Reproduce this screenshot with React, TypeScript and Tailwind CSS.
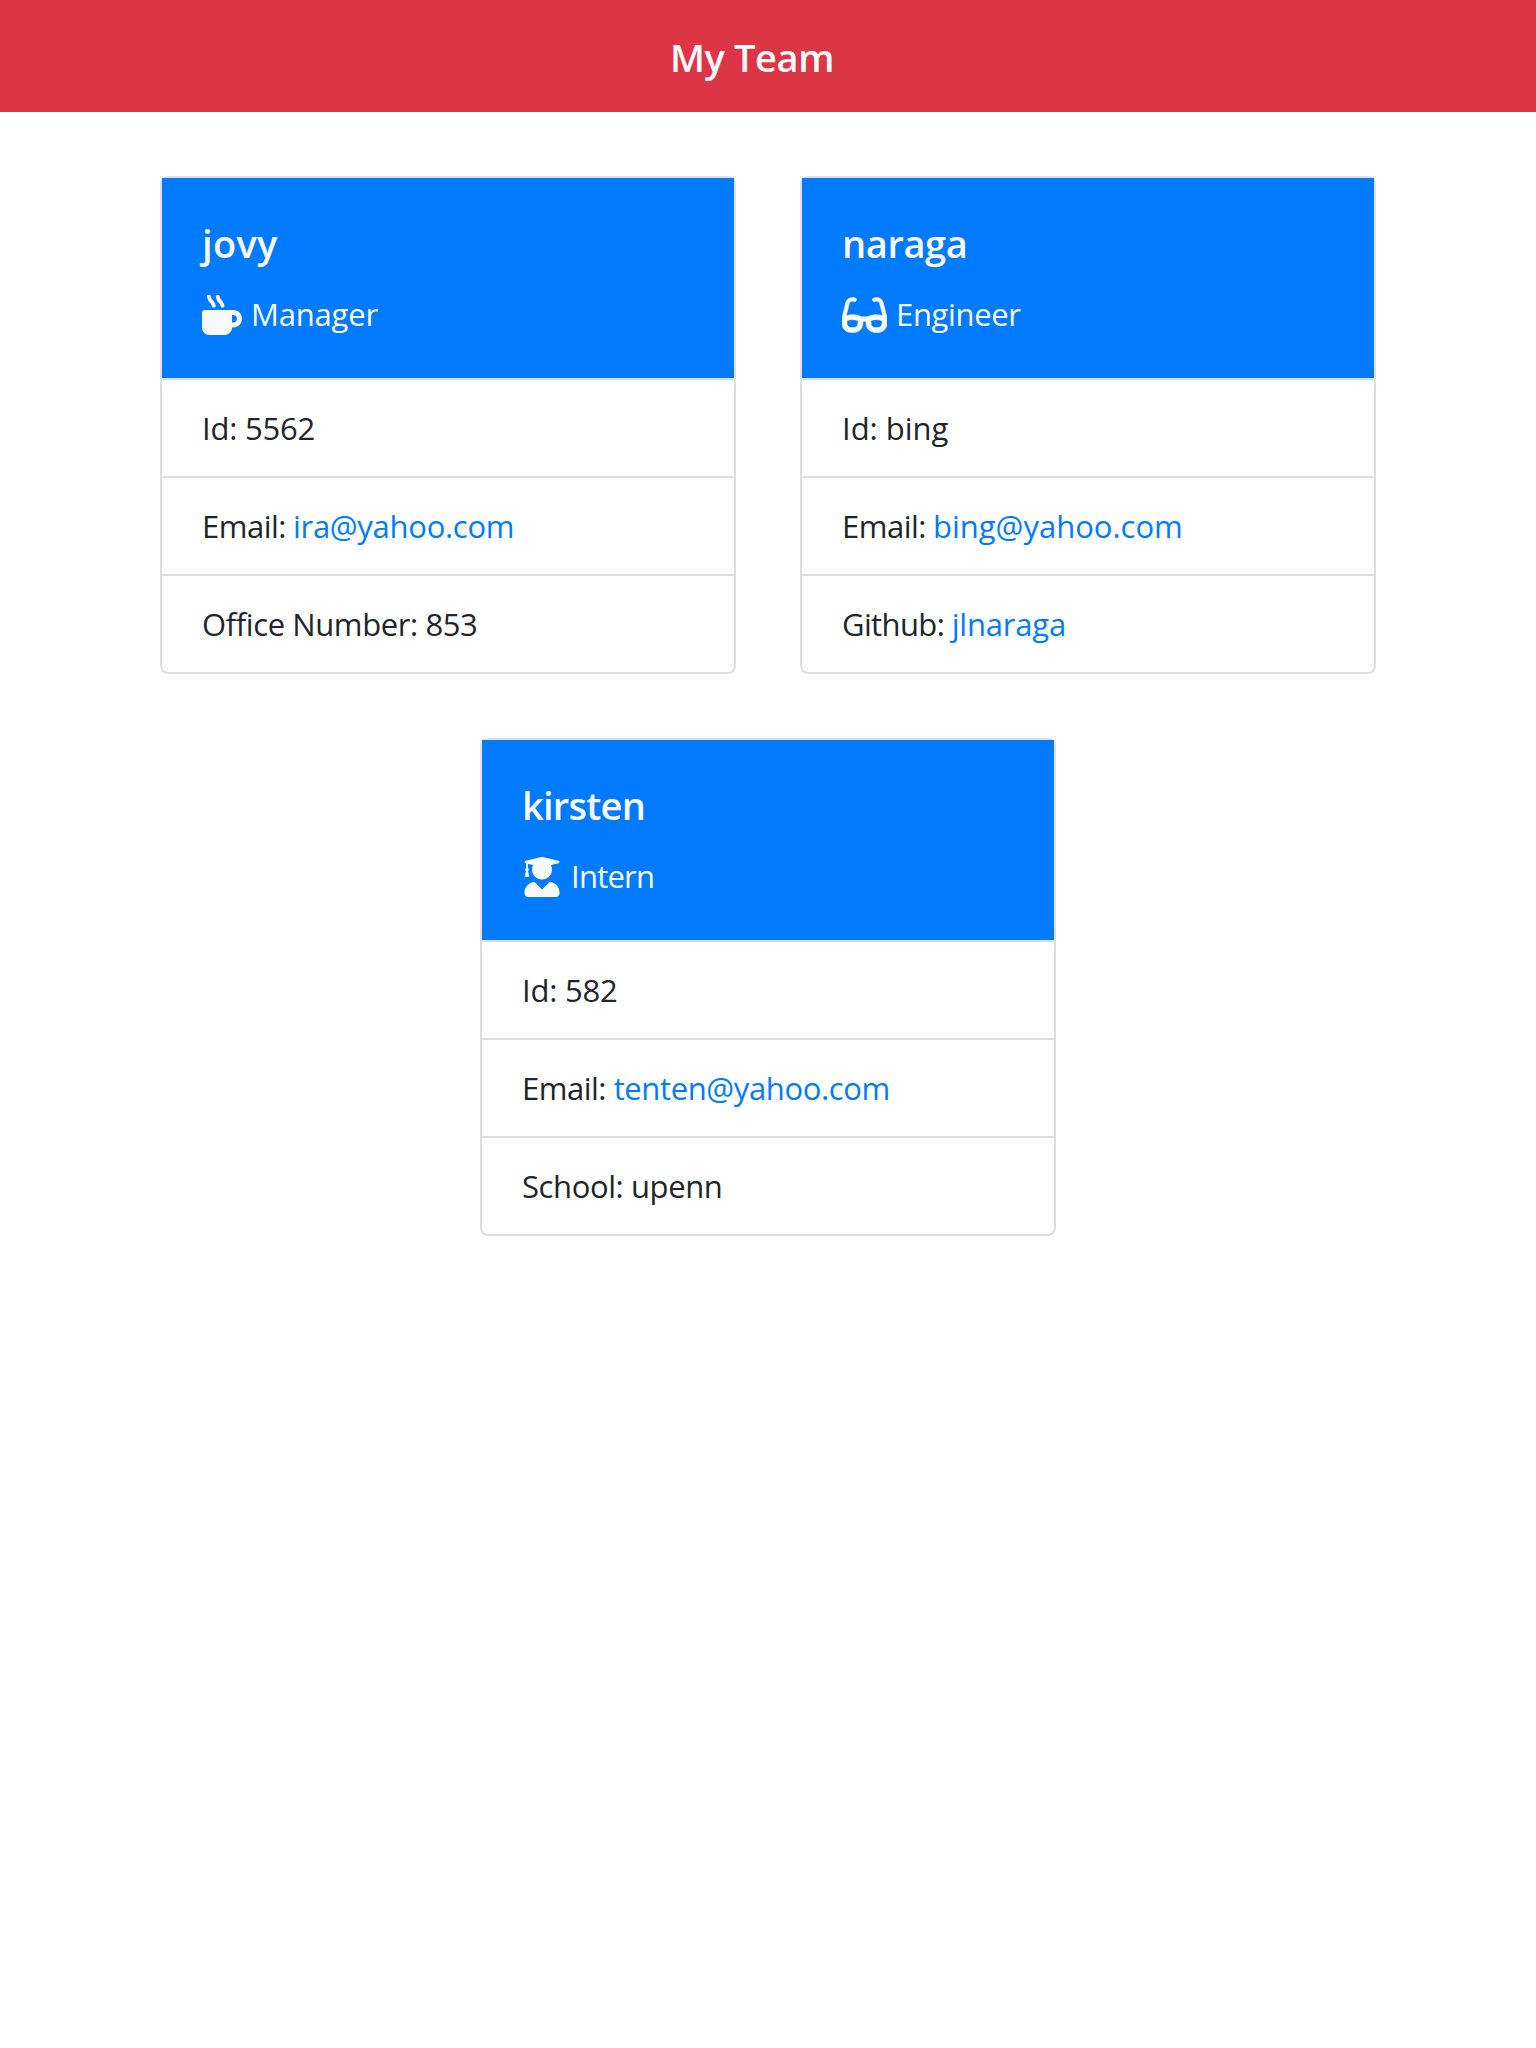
import type { ReactNode } from "react";
import { FaGlasses, FaMugHot, FaUserGraduate } from "react-icons/fa";

type Row = { label: string; labelClass: string; link?: string; linkClass?: string };
type Member = {
  name: string;
  nameClass: string;
  role: string;
  roleClass: string;
  icon: ReactNode;
  rows: Row[];
};

const members: Member[] = [
  {
    name: "jovy",
    nameClass: "tracking-[0.3px]",
    role: "Manager",
    roleClass: "tracking-[-0.2px]",
    icon: <FaMugHot className="h-10 w-10 shrink-0" />,
    rows: [
      { label: "Id: 5562", labelClass: "tracking-[-0.2px]" },
      {
        label: "Email:",
        labelClass: "tracking-[-0.5px]",
        link: "ira@yahoo.com",
        linkClass: "ml-[7px] tracking-[-0.28px]",
      },
      { label: "Office Number: 853", labelClass: "tracking-[-0.4px]" },
    ],
  },
  {
    name: "naraga",
    nameClass: "tracking-[-0.4px]",
    role: "Engineer",
    roleClass: "tracking-[-0.34px]",
    icon: <FaGlasses className="h-10 w-[45px] shrink-0" strokeWidth={6} />,
    rows: [
      { label: "Id: bing", labelClass: "tracking-normal" },
      {
        label: "Email:",
        labelClass: "tracking-[-0.5px]",
        link: "bing@yahoo.com",
        linkClass: "ml-[7px] tracking-normal",
      },
      {
        label: "Github:",
        labelClass: "tracking-[-0.62px]",
        link: "jlnaraga",
        linkClass: "ml-[7.5px] tracking-[-0.2px]",
      },
    ],
  },
  {
    name: "kirsten",
    nameClass: "tracking-[-0.75px]",
    role: "Intern",
    roleClass: "tracking-[-0.76px]",
    icon: <FaUserGraduate className="h-10 w-10 shrink-0" />,
    rows: [
      { label: "Id: 582", labelClass: "tracking-[-0.2px]" },
      {
        label: "Email:",
        labelClass: "tracking-[-0.5px]",
        link: "tenten@yahoo.com",
        linkClass: "ml-[7.7px] tracking-[-0.37px]",
      },
      { label: "School: upenn", labelClass: "tracking-[-0.4px]" },
    ],
  },
];

function MemberCard({ member }: { member: Member }) {
  return (
    <article className="w-[576px] rounded-lg border-2 border-[#dfdfdf] bg-white">
      <header className="h-[200px] bg-[#007bff] pt-[41px] pl-10 text-[#f8f9fa]">
        <h2 className={`text-[38px] leading-[48px] font-semibold ${member.nameClass}`}>
          {member.name}
        </h2>
        <div className="mt-7 flex h-10 items-center gap-[9px]">
          {member.icon}
          <span className={`pb-[2px] leading-[38px] ${member.roleClass}`}>{member.role}</span>
        </div>
      </header>
      <ul className="divide-y-2 divide-[#dfdfdf] border-t-2 border-[#dfdfdf]">
        {member.rows.map((row) => (
          <li key={row.label} className="box-content flex h-24 items-center pl-10 leading-[48px]">
            <span className={row.labelClass}>{row.label}</span>
            {row.link && (
              <a href="#" className={`text-[#007bff] ${row.linkClass}`}>
                {row.link}
              </a>
            )}
          </li>
        ))}
      </ul>
    </article>
  );
}

export default function App() {
  return (
    <div className="min-h-[2048px] bg-white font-['Open_Sans','Noto_Sans',sans-serif] text-[31px] text-[#212529]">
      <div className="flex h-28 items-center justify-center bg-[#dc3545] pt-[2px] pr-8">
        <h1 className="text-[38px] leading-[48px] font-semibold tracking-[-0.4px] text-[#f8f9fa]">
          My Team
        </h1>
      </div>
      <main className="mx-auto flex w-[1280px] flex-wrap justify-center gap-16 pt-16">
        {members.map((member) => (
          <MemberCard key={member.name} member={member} />
        ))}
      </main>
    </div>
  );
}
